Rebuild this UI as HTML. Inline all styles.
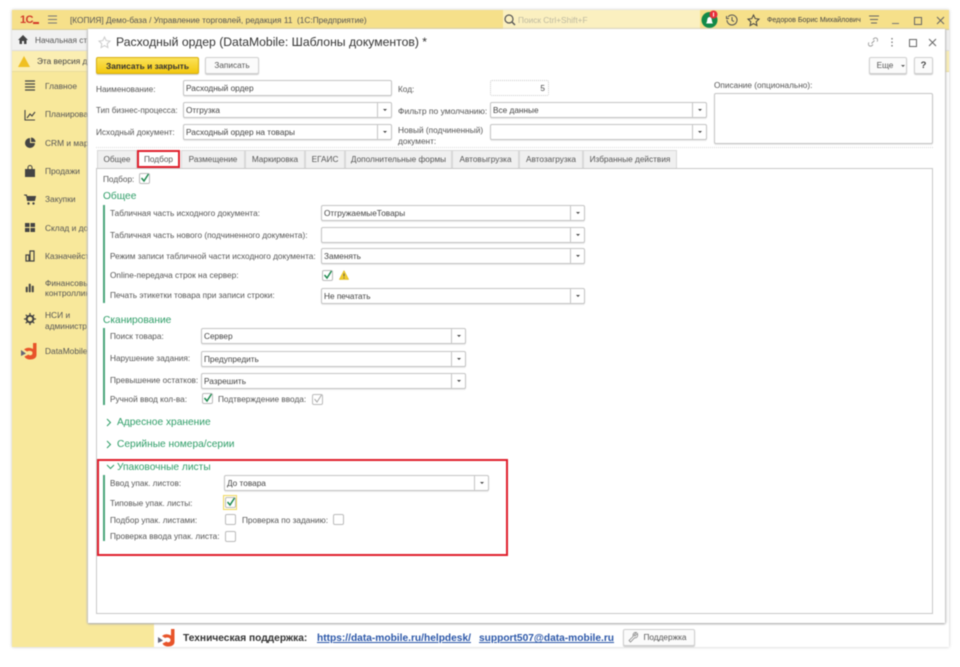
<!DOCTYPE html>
<html lang="ru"><head><meta charset="utf-8"><title>Расходный ордер</title>
<style>
html,body{margin:0;padding:0;background:#fff;width:960px;height:667px;overflow:hidden}
#r{position:absolute;left:0;top:0;width:960px;height:667px;overflow:hidden;font-family:"Liberation Sans",sans-serif;font-size:8.25px;color:#555;filter:blur(.4px)}
#r div,#r span.t,#r svg{position:absolute}
.t{position:absolute;white-space:nowrap;line-height:12px;height:12px;margin-top:.7px}
.n{margin-top:0}
.h{color:#2f9e68;font-size:10.2px}
.f{background:#fff;border:1px solid #c4c4c4;border-radius:2px;box-sizing:border-box;box-shadow:0 1px 1px #eaeaea;color:#444;line-height:15px;padding-left:2px;white-space:nowrap}
.f i{position:absolute;right:0;top:0;bottom:0;width:13px;border-left:1px solid #c4c4c4;font-style:normal}
.f i:after{content:"";position:absolute;left:5px;top:6px;border:2px solid transparent;border-top:2.5px solid #444;border-bottom:0}
.c{box-sizing:border-box;width:11px;height:11px;background:#fff;border:1px solid #bbb;border-radius:2px}
.tab{box-sizing:border-box;top:150px;height:18px;background:#f0f0f0;border:1px solid #d8d8d8;border-bottom:0;text-align:center;line-height:17px;color:#555}
.bar{background:#4aa67a;width:1.5px;left:103px}
.m{color:#555;font-size:8.4px;margin-top:0}
.btn{box-sizing:border-box;border:1px solid #d0d0d0;border-radius:2px;background:#fbfbfb;box-shadow:0 1px 1px #ccc;text-align:center;color:#555}
</style></head><body><div id="r">

<!-- window -->
<div style="left:12px;top:10px;width:937px;height:637px;background:#fdfdfd;box-shadow:0 0 3px #c4c4c4"></div>
<div style="left:12px;top:10px;width:937px;height:19px;background:#f6e08a;border-bottom:1px solid #d8cf9c"></div>
<div style="left:503px;top:10px;width:197px;height:19px;background:#fbf0c0"></div>
<div style="left:12px;top:30px;width:937px;height:20px;background:#f1f1f1;border-bottom:1px solid #ddd"></div>
<div style="left:12px;top:51px;width:937px;height:20px;background:#fbeeb2;border-bottom:1px solid #e8dc9c"></div>
<div style="left:12px;top:72px;width:142px;height:575px;background:#f8e89b"></div>

<!-- header -->
<span class="t n" style="left:20px;top:14px;color:#d23a2a;font-weight:bold;font-size:11px;letter-spacing:-.6px">1С</span>
<div style="left:33px;top:22px;width:6px;height:1.5px;background:#d23a2a"></div>
<svg style="left:48px;top:15px" width="10" height="9"><path d="M0 1h9M0 4.5h9M0 8h9" stroke="#777" stroke-width="1"/></svg>
<span class="t n" style="left:70px;top:14px;color:#555;font-size:8.3px">[КОПИЯ] Демо-база / Управление торговлей, редакция 11&nbsp; (1С:Предприятие)</span>
<svg style="left:504px;top:14px" width="12" height="12"><circle cx="5" cy="5" r="4" fill="none" stroke="#555" stroke-width="1.2"/><path d="M8 8l3 3" stroke="#555" stroke-width="1.4"/></svg>
<span class="t n" style="left:518px;top:14px;color:#bdb9a0;font-size:8.3px">Поиск Ctrl+Shift+F</span>
<svg style="left:700px;top:9px" width="20" height="21"><circle cx="9.5" cy="11" r="8" fill="#128a48"/><path d="M6 14.5c1-1 1-3 1.500-5 1-2 3-2 4 0 .5 2 .5 4 1.500 5z" fill="#fff"/><circle cx="13.500" cy="5.500" r="4" fill="#e8303a"/><path d="M13.500 3.500v4" stroke="#fff" stroke-width="1"/></svg>
<svg style="left:726px;top:14px" width="12" height="12"><path d="M2 3A5 5 0 1 1 1 6" fill="none" stroke="#555" stroke-width="1"/><path d="M6 3v3.500l2 1M.5 2v2.500h2.500" fill="none" stroke="#555" stroke-width="1"/></svg>
<svg style="left:747px;top:14px" width="13" height="13"><path d="M6.500 1l1.700 3.600 3.800.5-2.800 2.600.7 3.800-3.400-1.900-3.400 1.900.7-3.800L1 5.100l3.800-.5z" fill="none" stroke="#444" stroke-width="1"/></svg>
<span class="t n" style="left:767px;top:14px;color:#444;font-size:7.1px">Федоров Борис Михайлович</span>
<svg style="left:868px;top:15px" width="12" height="11"><path d="M1 1h10M2 4.500h8M3 8h6" stroke="#666" stroke-width="1"/></svg>
<div style="left:892px;top:23px;width:7px;height:1px;background:#777"></div>
<div style="left:914px;top:17px;width:6px;height:6px;border:1px solid #666;box-sizing:content-box"></div>
<svg style="left:936px;top:16px" width="9" height="9"><path d="M1 1l7 7M8 1l-7 7" stroke="#666" stroke-width="1"/></svg>

<!-- behind rows -->
<svg style="left:18px;top:35px" width="10" height="9"><path d="M5 0L0 5h1.500v4h2.500V6h2v3h2.500V5H10z" fill="#444"/></svg>
<span class="t n" style="left:35px;top:35px;color:#555">Начальная ст</span>
<svg style="left:18px;top:56px" width="12" height="11"><path d="M6 0l6 11H0z" fill="#f0c020"/></svg>
<span class="t n" style="left:37px;top:56px;color:#444">Эта версия д</span>

<!-- sidebar -->
<svg style="left:24px;top:80px" width="12" height="11"><path d="M1 1h10M1 4h10M1 7h10M1 10h10" stroke="#444" stroke-width="1.200"/></svg>
<span class="t m" style="left:45px;top:80px">Главное</span>
<svg style="left:24px;top:109px" width="12" height="12"><path d="M1 1v10h10M3 9l3-4 2 2 3-4" fill="none" stroke="#444" stroke-width="1.100"/></svg>
<span class="t m" style="left:45px;top:108px">Планирова</span>
<svg style="left:24px;top:137px" width="12" height="12"><path d="M6 1a5 5 0 1 0 5 5H6z" fill="#444"/><path d="M7 .5v4.500h4.500A4.500 4.500 0 0 0 7 .5z" fill="#444"/></svg>
<span class="t m" style="left:45px;top:137px">CRM и мар</span>
<svg style="left:24px;top:165px" width="12" height="12"><path d="M1 4h10v8H1z" fill="#444"/><path d="M4 4V2.500a2 2 0 0 1 4 0V4" fill="none" stroke="#444"/></svg>
<span class="t m" style="left:45px;top:165px">Продажи</span>
<svg style="left:24px;top:194px" width="12" height="11"><path d="M0 1h2.500l1 5.500h7l1-4H3" fill="#444" stroke="#444"/><circle cx="4.500" cy="9.500" r="1.200" fill="#444"/><circle cx="9.500" cy="9.500" r="1.200" fill="#444"/></svg>
<span class="t m" style="left:45px;top:193px">Закупки</span>
<svg style="left:24px;top:222px" width="12" height="11"><path d="M1 1h4.500v4H1zM6.500 1H11v4H6.500zM1 6h4.500v4H1zM6.500 6H11v4H6.500z" fill="#444"/></svg>
<span class="t m" style="left:45px;top:222px">Склад и до</span>
<svg style="left:24px;top:250px" width="12" height="12"><path d="M6 1h4v10H6zM2 5h3v6H2z" fill="none" stroke="#444" stroke-width="1.200"/></svg>
<span class="t m" style="left:45px;top:250px">Казначейст</span>
<svg style="left:24px;top:282px" width="12" height="11"><path d="M2 5h1.500v5H2zM5 2h1.500v8H5zM8 4h1.500v6H8z" fill="#444" stroke="#444" stroke-width=".5"/></svg>
<span class="t m" style="left:45px;top:277px">Финансовь</span>
<span class="t m" style="left:45px;top:287px">контроллин</span>
<svg style="left:24px;top:313px" width="12" height="12"><circle cx="6" cy="6" r="3.300" fill="none" stroke="#444" stroke-width="2"/><path d="M6 0v2.500M6 9.500V12M0 6h2.500M9.500 6H12M1.800 1.800l1.800 1.800M8.400 8.400l1.800 1.800M1.800 10.200l1.800-1.800M8.400 3.600l1.800-1.800" stroke="#444" stroke-width="1.300"/></svg>
<span class="t m" style="left:45px;top:309px">НСИ и</span>
<span class="t m" style="left:45px;top:320px">администр</span>
<svg style="left:21px;top:343px" width="17" height="17"><path d="M12 0h3.500v12c0 3-3 4.500-6 4.500-3 0-5-1-6-3l4-2c1 1.500 4 1 4-1.500S8 7.500 6 8.500L3 6.500C6 4 9.500 4.500 12 6z" fill="#e8542a"/><path d="M0 7l5 3.500L0 13z" fill="#667"/></svg>
<span class="t m" style="left:45px;top:345px">DataMobile</span>

<!-- bottom bar -->
<div style="left:154px;top:623px;width:795px;height:24px;background:#fff"></div>
<svg style="left:158px;top:629px" width="19" height="18"><path d="M13 0h3.500v13c0 3-3 4.500-6 4.500-3 0-5-1-6-3l4-2c1 1.500 4 1 4-1.500S9 8 7 9L4 7c3-2.500 6-2 9-.5z" fill="#e8542a"/><path d="M0 8l5 3.500L0 14z" fill="#667"/></svg>
<span class="t" style="left:183px;top:632.500px;font-size:10.2px;font-weight:bold;color:#333">Техническая поддержка:</span>
<span class="t" style="left:317px;top:632.500px;font-size:10.2px;font-weight:bold;color:#2a56a8;text-decoration:underline">https://data-mobile.ru/helpdesk/</span>
<span class="t" style="left:479px;top:632.500px;font-size:10.2px;font-weight:bold;color:#2a56a8;text-decoration:underline">support507@data-mobile.ru</span>
<div class="btn" style="left:623px;top:629px;width:72px;height:17px;line-height:16px;padding-left:12px">Поддержка</div>
<svg style="left:628px;top:632px" width="11" height="11"><path d="M9.500 1.500L7 4 6 3l2.500-2.500C7 0 5 1 5 3c0 .5 0 1 .3 1.300L1 8.500 2.500 10 6.700 5.700C8.500 6.300 10.300 4.500 9.500 1.500z" fill="none" stroke="#888" stroke-width=".8"/></svg>

<!-- dialog -->
<div style="left:88px;top:29px;width:857px;height:594px;background:#fff;box-shadow:0 1px 2px #aaa,-1px 0 2px #ccc,1px 0 2px #ccc"></div>
<svg style="left:98px;top:36px" width="13" height="13"><path d="M6.500 1l1.700 3.600 3.800.5-2.800 2.600.7 3.800-3.400-1.900-3.400 1.900.7-3.800L1 5.100l3.800-.5z" fill="none" stroke="#ccc" stroke-width="1"/></svg>
<span class="t n" style="left:116px;top:36px;font-size:12.2px;line-height:13px;height:13px;color:#333">Расходный ордер (DataMobile: Шаблоны документов) *</span>
<svg style="left:867px;top:36px" width="12" height="12"><path d="M2 6.500a2 2 0 0 0 3 3l1-1M10 5.500a2 2 0 0 0-3-3l-1 1M4.500 7.500l3-3" fill="none" stroke="#999" stroke-width=".9"/></svg>
<svg style="left:890px;top:37px" width="4" height="11"><path d="M2 1v1.500M2 4.500V6M2 8v1.500" stroke="#777" stroke-width="1.300"/></svg>
<div style="left:909px;top:39px;width:6px;height:6px;border:1px solid #666"></div>
<svg style="left:928px;top:38px" width="9" height="9"><path d="M1 1l7 7M8 1l-7 7" stroke="#666" stroke-width="1"/></svg>

<div class="btn" style="left:96px;top:57px;width:103px;height:17px;line-height:16px;background:linear-gradient(#fbe25a,#f3c80e);border-color:#d8b010;color:#333;font-weight:bold;font-size:8.4px">Записать и закрыть</div>
<div class="btn" style="left:205px;top:57px;width:54px;height:17px;line-height:16px">Записать</div>
<div class="btn" style="left:869px;top:57px;width:38px;height:17px;line-height:16px;padding-right:6px">Еще</div>
<div style="left:901px;top:65px;border:2px solid transparent;border-top:2.500px solid #555;border-bottom:0"></div>
<div class="btn" style="left:914px;top:57px;width:19px;height:17px;line-height:16px;font-weight:bold;color:#444;font-size:9.500px">?</div>

<span class="t" style="left:96px;top:83px">Наименование:</span>
<div class="f" style="left:183px;top:80px;width:209px;height:16px">Расходный ордер</div>
<span class="t" style="left:96px;top:104px;font-size:8.1px">Тип бизнес-процесса:</span>
<div class="f" style="left:183px;top:102px;width:209px;height:16px">Отгрузка<i></i></div>
<span class="t" style="left:96px;top:126px">Исходный документ:</span>
<div class="f" style="left:183px;top:124px;width:209px;height:16px">Расходный ордер на товары<i></i></div>
<span class="t" style="left:398px;top:83px">Код:</span>
<div class="f" style="left:490px;top:80px;width:59px;height:16px;border:1px dotted #ccc;box-shadow:none;text-align:right;padding-right:3px">5</div>
<span class="t" style="left:398px;top:104px;font-size:8.5px">Фильтр по умолчанию:</span>
<div class="f" style="left:490px;top:102px;width:217px;height:16px">Все данные<i></i></div>
<span class="t" style="left:398px;top:123px;font-size:8.300px">Новый (подчиненный)</span>
<span class="t" style="left:398px;top:134px;font-size:8.300px">документ:</span>
<div class="f" style="left:490px;top:124px;width:217px;height:16px"><i></i></div>
<span class="t" style="left:714px;top:79px">Описание (опционально):</span>
<div class="f" style="left:714px;top:93px;width:219px;height:51px"></div>
<div style="left:96px;top:147px;width:837px;height:0;border-top:1px dotted #ddd"></div>

<!-- tab panel -->
<div style="left:96px;top:168px;width:837px;height:446px;box-sizing:border-box;border:1px solid #c8c8c8;background:#fff"></div>
<div class="tab" style="left:97px;width:40px">Общее</div>
<div class="tab" style="left:181px;width:64px">Размещение</div>
<div class="tab" style="left:245px;width:60px">Маркировка</div>
<div class="tab" style="left:305px;width:40px">ЕГАИС</div>
<div class="tab" style="left:345px;width:107px">Дополнительные формы</div>
<div class="tab" style="left:452px;width:67px">Автовыгрузка</div>
<div class="tab" style="left:519px;width:64px">Автозагрузка</div>
<div class="tab" style="left:583px;width:94px">Избранные действия</div>
<div class="tab" style="left:137px;width:43px;background:#fff;border:2px solid #e01f2d;line-height:15px">Подбор</div>

<span class="t" style="left:103px;top:173px">Подбор:</span>
<div class="c" style="left:139px;top:173px"></div>
<svg style="left:139px;top:172px" width="12" height="12"><path d="M2.500 6l2.500 3 4.500-7" fill="none" stroke="#1f8a50" stroke-width="1.500"/></svg>

<span class="t h" style="left:103px;top:190.500px">Общее</span>
<div class="bar" style="top:205px;height:98px"></div>
<span class="t" style="left:110px;top:207px">Табличная часть исходного документа:</span>
<div class="f" style="left:321px;top:205px;width:264px;height:16px">ОтгружаемыеТовары<i></i></div>
<span class="t" style="left:110px;top:229px">Табличная часть нового (подчиненного документа):</span>
<div class="f" style="left:321px;top:227px;width:264px;height:16px"><i></i></div>
<span class="t" style="left:110px;top:250px">Режим записи табличной части исходного документа:</span>
<div class="f" style="left:321px;top:248px;width:264px;height:16px">Заменять<i></i></div>
<span class="t" style="left:110px;top:269px">Online-передача строк на сервер:</span>
<div class="c" style="left:322px;top:270px"></div>
<svg style="left:322px;top:269px" width="12" height="12"><path d="M2.500 6l2.500 3 4.500-7" fill="none" stroke="#1f8a50" stroke-width="1.500"/></svg>
<svg style="left:339px;top:270px" width="10" height="10"><path d="M5 .5l4.700 9H.3z" fill="#f1cc2c" stroke="#d9b010" stroke-width=".5"/><path d="M5 3.500v3M5 7.500v1" stroke="#555" stroke-width=".9"/></svg>
<span class="t" style="left:110px;top:289px">Печать этикетки товара при записи строки:</span>
<div class="f" style="left:321px;top:288px;width:264px;height:16px">Не печатать<i></i></div>

<span class="t h" style="left:103px;top:314.500px">Сканирование</span>
<div class="bar" style="top:328px;height:77px"></div>
<span class="t" style="left:110px;top:330px">Поиск товара:</span>
<div class="f" style="left:201px;top:328px;width:265px;height:16px">Сервер<i></i></div>
<span class="t" style="left:110px;top:352px">Нарушение задания:</span>
<div class="f" style="left:201px;top:351px;width:265px;height:16px">Предупредить<i></i></div>
<span class="t" style="left:110px;top:374px">Превышение остатков:</span>
<div class="f" style="left:201px;top:373px;width:265px;height:16px">Разрешить<i></i></div>
<span class="t" style="left:110px;top:393px">Ручной ввод кол-ва:</span>
<div class="c" style="left:202px;top:393px"></div>
<svg style="left:202px;top:392px" width="12" height="12"><path d="M2.500 6l2.500 3 4.500-7" fill="none" stroke="#1f8a50" stroke-width="1.500"/></svg>
<span class="t" style="left:218px;top:393px">Подтверждение ввода:</span>
<div class="c" style="left:312px;top:394px"></div>
<svg style="left:312px;top:393px" width="12" height="12"><path d="M2.500 6l2.500 3 4.500-7" fill="none" stroke="#aaa" stroke-width="1"/></svg>

<svg style="left:106px;top:418px" width="6" height="9"><path d="M1 1l3.500 3.500L1 8" fill="none" stroke="#2f9e68" stroke-width="1"/></svg>
<span class="t h" style="left:117px;top:416.500px">Адресное хранение</span>
<svg style="left:106px;top:440px" width="6" height="9"><path d="M1 1l3.500 3.500L1 8" fill="none" stroke="#2f9e68" stroke-width="1"/></svg>
<span class="t h" style="left:117px;top:438.500px">Серийные номера/серии</span>

<div style="left:97px;top:459px;width:411px;height:97px;box-sizing:border-box;border:2px solid #e01f2d"></div>
<svg style="left:106px;top:464px" width="9" height="6"><path d="M1 1l3.500 3.500L8 1" fill="none" stroke="#2f9e68" stroke-width="1"/></svg>
<span class="t h" style="left:117px;top:461.500px">Упаковочные листы</span>
<div class="bar" style="top:475px;height:66px"></div>
<span class="t" style="left:110px;top:477px">Ввод упак. листов:</span>
<div class="f" style="left:224px;top:475px;width:265px;height:16px">До товара<i></i></div>
<span class="t" style="left:110px;top:497px">Типовые упак. листы:</span>
<div style="left:223px;top:495px;width:14px;height:15px;box-sizing:border-box;border:1px solid #f0d860;background:#fffdf0"></div>
<div class="c" style="left:225px;top:497px"></div>
<svg style="left:225px;top:496px" width="12" height="12"><path d="M2.500 6l2.500 3 4.500-7" fill="none" stroke="#1f8a50" stroke-width="1.500"/></svg>
<span class="t" style="left:110px;top:514px">Подбор упак. листами:</span>
<div class="c" style="left:225px;top:514px"></div>
<span class="t" style="left:242px;top:514px">Проверка по заданию:</span>
<div class="c" style="left:333px;top:514px"></div>
<span class="t" style="left:110px;top:530px">Проверка ввода упак. листа:</span>
<div class="c" style="left:225px;top:531px"></div>

</div></body></html>
